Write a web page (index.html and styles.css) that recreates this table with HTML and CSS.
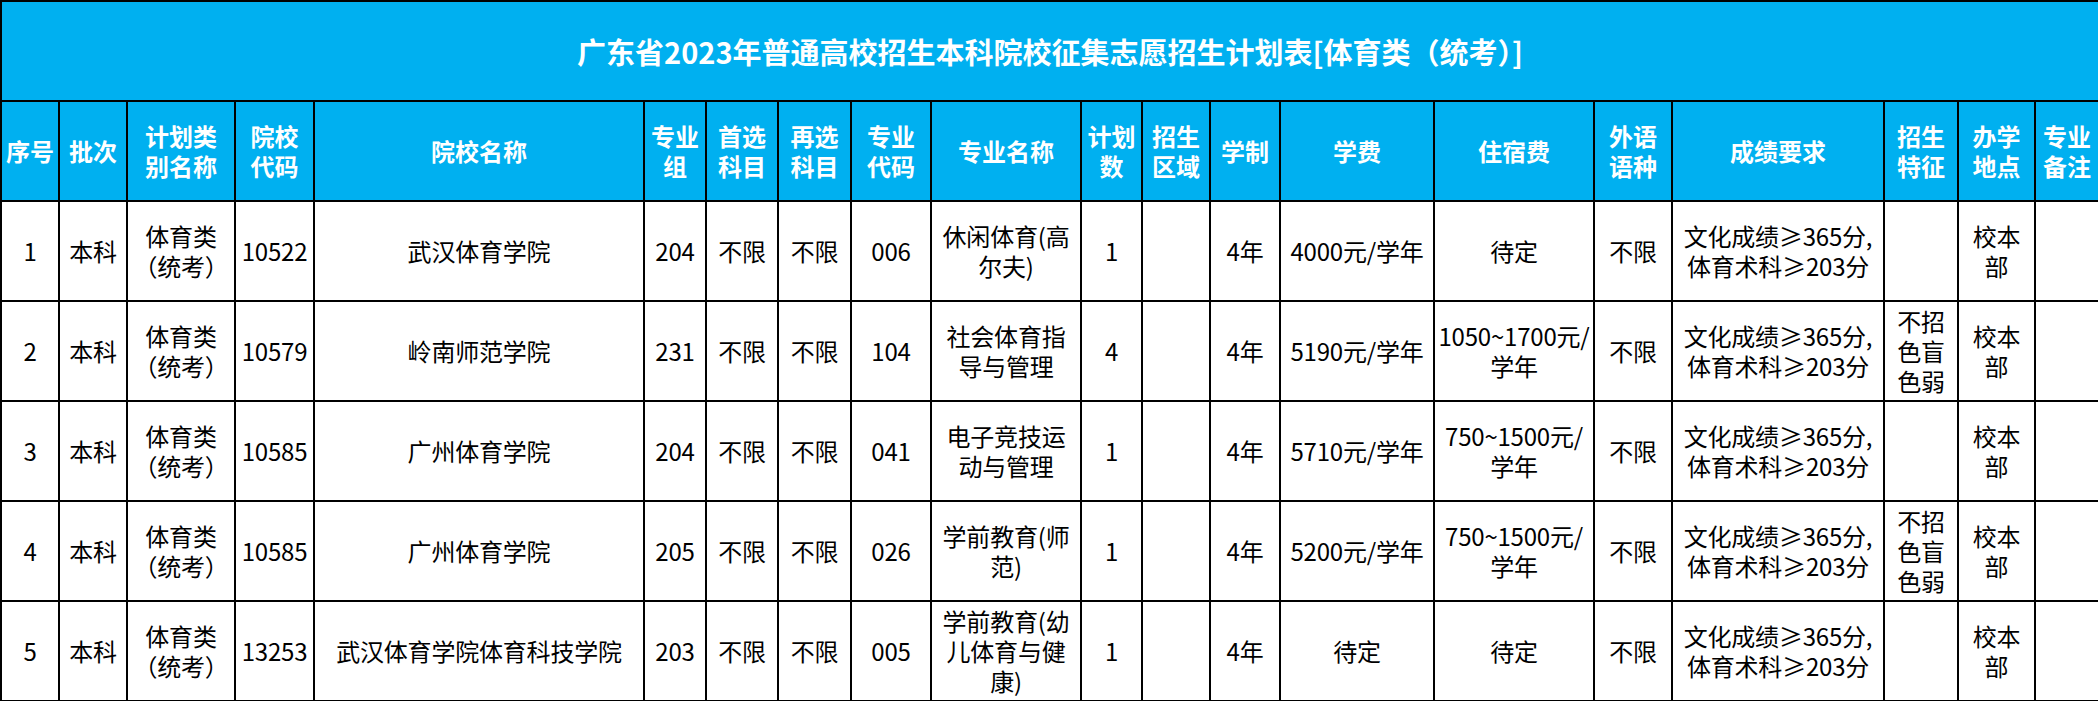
FILE: index.html
```html
<!DOCTYPE html>
<html lang="zh-CN">
<head>
<meta charset="utf-8">
<title>广东省2023年普通高校招生本科院校征集志愿招生计划表</title>
<link rel="stylesheet" href="styles.css">
</head>
<body>
<table class="plan">
  <colgroup>
    <col class="c58"><col class="c68"><col class="c108"><col class="c79"><col class="c330">
    <col class="c62"><col class="c72"><col class="c73"><col class="c80"><col class="c150">
    <col class="c61"><col class="c68"><col class="c70"><col class="c154"><col class="c160">
    <col class="c78"><col class="c212"><col class="c74"><col class="c77"><col class="c64">
  </colgroup>
  <thead>
    <tr class="title-row">
      <th colspan="20" class="title">广东省2023年普通高校招生本科院校征集志愿招生计划表[体育类（统考）]</th>
    </tr>
    <tr class="head-row">
      <th>序号</th>
      <th>批次</th>
      <th>计划类<br>别名称</th>
      <th>院校<br>代码</th>
      <th>院校名称</th>
      <th>专业<br>组</th>
      <th>首选<br>科目</th>
      <th>再选<br>科目</th>
      <th>专业<br>代码</th>
      <th>专业名称</th>
      <th>计划<br>数</th>
      <th>招生<br>区域</th>
      <th>学制</th>
      <th>学费</th>
      <th>住宿费</th>
      <th>外语<br>语种</th>
      <th>成绩要求</th>
      <th>招生<br>特征</th>
      <th>办学<br>地点</th>
      <th>专业<br>备注</th>
    </tr>
  </thead>
  <tbody>
    <tr>
      <td>1</td><td>本科</td><td>体育类<br>（统考）</td><td>10522</td><td>武汉体育学院</td>
      <td>204</td><td>不限</td><td>不限</td><td>006</td><td>休闲体育(高<br>尔夫)</td>
      <td>1</td><td></td><td>4年</td><td>4000元/学年</td><td>待定</td>
      <td>不限</td><td>文化成绩≥365分,<br>体育术科≥203分</td><td></td><td>校本<br>部</td><td></td>
    </tr>
    <tr>
      <td>2</td><td>本科</td><td>体育类<br>（统考）</td><td>10579</td><td>岭南师范学院</td>
      <td>231</td><td>不限</td><td>不限</td><td>104</td><td>社会体育指<br>导与管理</td>
      <td>4</td><td></td><td>4年</td><td>5190元/学年</td><td>1050~1700元/<br>学年</td>
      <td>不限</td><td>文化成绩≥365分,<br>体育术科≥203分</td><td>不招<br>色盲<br>色弱</td><td>校本<br>部</td><td></td>
    </tr>
    <tr>
      <td>3</td><td>本科</td><td>体育类<br>（统考）</td><td>10585</td><td>广州体育学院</td>
      <td>204</td><td>不限</td><td>不限</td><td>041</td><td>电子竞技运<br>动与管理</td>
      <td>1</td><td></td><td>4年</td><td>5710元/学年</td><td>750~1500元/<br>学年</td>
      <td>不限</td><td>文化成绩≥365分,<br>体育术科≥203分</td><td></td><td>校本<br>部</td><td></td>
    </tr>
    <tr>
      <td>4</td><td>本科</td><td>体育类<br>（统考）</td><td>10585</td><td>广州体育学院</td>
      <td>205</td><td>不限</td><td>不限</td><td>026</td><td>学前教育(师<br>范)</td>
      <td>1</td><td></td><td>4年</td><td>5200元/学年</td><td>750~1500元/<br>学年</td>
      <td>不限</td><td>文化成绩≥365分,<br>体育术科≥203分</td><td>不招<br>色盲<br>色弱</td><td>校本<br>部</td><td></td>
    </tr>
    <tr>
      <td>5</td><td>本科</td><td>体育类<br>（统考）</td><td>13253</td><td>武汉体育学院体育科技学院</td>
      <td>203</td><td>不限</td><td>不限</td><td>005</td><td>学前教育(幼<br>儿体育与健<br>康)</td>
      <td>1</td><td></td><td>4年</td><td>待定</td><td>待定</td>
      <td>不限</td><td>文化成绩≥365分,<br>体育术科≥203分</td><td></td><td>校本<br>部</td><td></td>
    </tr>
  </tbody>
</table>
</body>
</html>
```
FILE: styles.css
```css
html, body {
  margin: 0;
  padding: 0;
  background: #ffffff;
}

.plan {
  width: 2098px;
  table-layout: fixed;
  border-collapse: collapse;
  font-family: "Liberation Sans Narrow", "Noto Sans CJK SC", sans-serif;
  color: #000000;
}

.c58 { width: 58px; }
.c61 { width: 61px; }
.c62 { width: 62px; }
.c64 { width: 64px; }
.c68 { width: 68px; }
.c70 { width: 70px; }
.c72 { width: 72px; }
.c73 { width: 73px; }
.c74 { width: 74px; }
.c77 { width: 77px; }
.c78 { width: 78px; }
.c79 { width: 79px; }
.c80 { width: 80px; }
.c108 { width: 108px; }
.c150 { width: 150px; }
.c154 { width: 154px; }
.c160 { width: 160px; }
.c212 { width: 212px; }
.c330 { width: 330px; }

.plan th,
.plan td {
  border: 2px solid #000000;
  padding: 0 2px;
  text-align: center;
  vertical-align: middle;
  font-size: 24px;
  line-height: 30px;
  overflow: hidden;
  white-space: nowrap;
}

.plan tr {
  height: 100px;
}

.plan th {
  background: #00b0f0;
  color: #ffffff;
  font-family: "Noto Sans CJK SC", sans-serif;
  font-weight: 700;
}

.plan td {
  font-weight: 400;
  letter-spacing: -0.2px;
}

.plan th.title {
  font-size: 29px;
  line-height: 36px;
  font-weight: 700;
}
```
